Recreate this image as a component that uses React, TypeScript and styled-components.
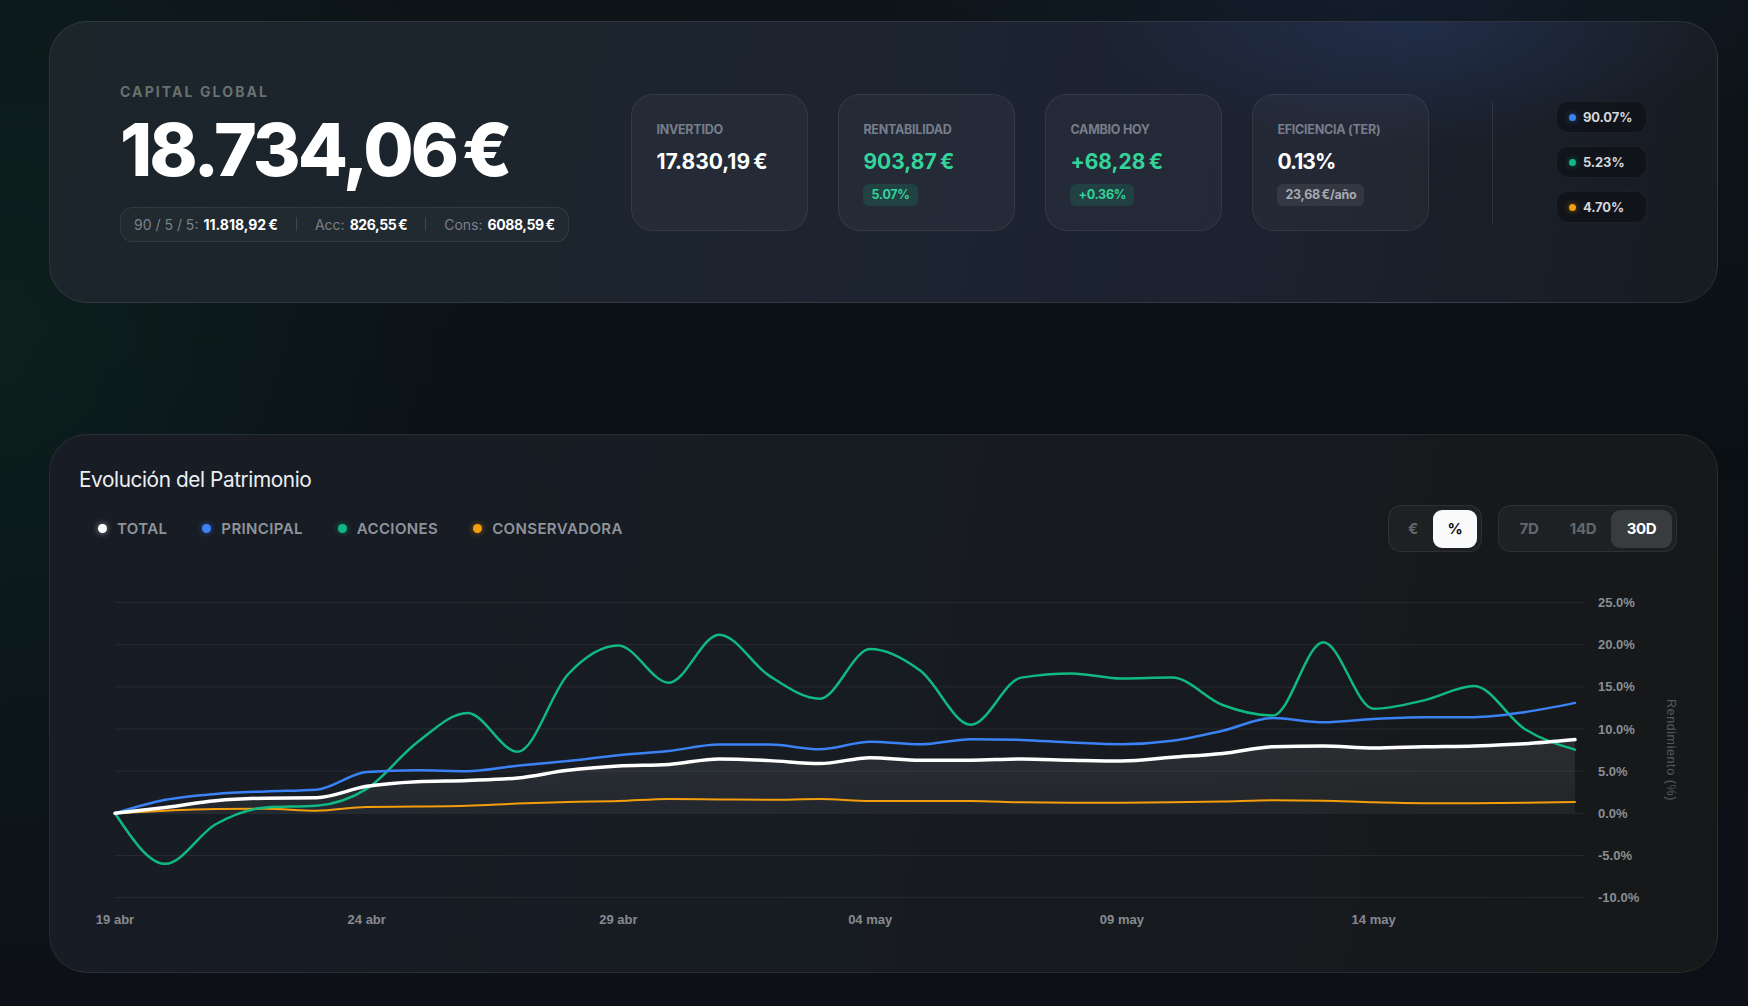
import React, { useState } from 'react';
import styled, { createGlobalStyle } from 'styled-components';

const GlobalStyle = createGlobalStyle`
  html, body {
    margin: 0;
    padding: 0;
  }
  body {
    background: #0b0f14;
    font-family: Inter, "Noto Sans", "Liberation Sans", sans-serif;
    -webkit-font-smoothing: antialiased;
  }
`;

const Page = styled.main`
  box-sizing: border-box;
  min-height: 1006px;
  padding: 21px 30px 0 49px;
  display: flex;
  flex-direction: column;
  gap: 131px;
  background:
    radial-gradient(ellipse 700px 900px at 0% 35%, rgba(14, 58, 44, 0.35), transparent 70%),
    radial-gradient(ellipse 700px 260px at 78% 0%, rgba(38, 58, 110, 0.22), transparent 70%),
    linear-gradient(180deg, #0d1418 0%, #0b1015 45%, #0d1117 100%);
`;

/* ---------- hero ---------- */

const HeroCard = styled.section`
  box-sizing: border-box;
  height: 282px;
  border-radius: 38px;
  border: 1px solid rgba(255, 255, 255, 0.09);
  padding: 0 70px;
  display: flex;
  align-items: center;
  justify-content: space-between;
  background:
    radial-gradient(ellipse 420px 160px at 82% 0%, rgba(52, 80, 150, 0.28), transparent 75%),
    linear-gradient(100deg, #1b252a 0%, #1d2430 45%, #1c2230 70%, #171c22 100%);
`;

const Summary = styled.div`
  display: flex;
  flex-direction: column;
  align-items: flex-start;
`;

const Eyebrow = styled.div`
  font-size: 14px;
  line-height: 17px;
  font-weight: 700;
  letter-spacing: 2.1px;
  color: #68716f;
  text-transform: uppercase;
`;

const BigNumber = styled.div`
  margin-top: 13px;
  font-size: 73px;
  line-height: 74px;
  font-weight: 800;
  letter-spacing: -0.04em;
  color: #ffffff;
  white-space: nowrap;
  span {
    margin-left: 0.08em;
  }
`;

const SplitPill = styled.div`
  margin-top: 20px;
  box-sizing: border-box;
  height: 35px;
  display: flex;
  align-items: center;
  gap: 18px;
  padding: 0 13px;
  border-radius: 13px;
  border: 1px solid rgba(255, 255, 255, 0.08);
  background: rgba(255, 255, 255, 0.025);
  font-size: 14px;
  white-space: nowrap;
`;

const SplitItem = styled.span`
  color: #7b8187;
  letter-spacing: 0;
  b {
    color: #ffffff;
    font-weight: 700;
    margin-left: 5px;
    letter-spacing: -0.03em;
  }
`;

const SplitSep = styled.span`
  width: 1px;
  height: 14px;
  background: rgba(255, 255, 255, 0.14);
`;

const Stats = styled.div`
  display: flex;
  gap: 30px;
`;

const StatCard = styled.div`
  box-sizing: border-box;
  width: 177px;
  height: 137px;
  padding: 28px 24px 0 24px;
  border-radius: 22px;
  border: 1px solid rgba(255, 255, 255, 0.07);
  background: rgba(255, 255, 255, 0.035);
  display: flex;
  flex-direction: column;
  align-items: flex-start;
`;

const StatLabel = styled.div`
  font-size: 12.5px;
  line-height: 14px;
  font-weight: 700;
  color: #777d8a;
  text-transform: uppercase;
  letter-spacing: -0.02em;
  white-space: nowrap;
`;

const StatValue = styled.div<{ $tone: 'plain' | 'good' }>`
  margin-top: 12px;
  font-size: 21px;
  line-height: 26px;
  font-weight: 700;
  letter-spacing: -0.045em;
  color: ${p => (p.$tone === 'good' ? '#34d399' : '#ffffff')};
  white-space: nowrap;
`;

const StatBadge = styled.span<{ $tone: 'good' | 'muted' }>`
  margin-top: 9px;
  height: 22px;
  display: inline-flex;
  align-items: center;
  padding: 0 8px;
  border-radius: 6px;
  font-size: 12.5px;
  font-weight: 700;
  letter-spacing: -0.02em;
  color: ${p => (p.$tone === 'good' ? '#34d399' : '#a6a9b0')};
  background: ${p => (p.$tone === 'good' ? 'rgba(16, 185, 129, 0.16)' : 'rgba(255, 255, 255, 0.08)')};
`;

const VDivider = styled.div`
  width: 1px;
  height: 123px;
  background: rgba(255, 255, 255, 0.09);
`;

const Chips = styled.div`
  display: flex;
  flex-direction: column;
  gap: 13px;
`;

const Chip = styled.div`
  box-sizing: border-box;
  width: 91px;
  height: 32px;
  padding: 0 12px;
  display: flex;
  align-items: center;
  gap: 7px;
  border-radius: 12px;
  border: 1px solid rgba(255, 255, 255, 0.06);
  background: rgba(6, 9, 14, 0.45);
  font-size: 13px;
  font-weight: 700;
  color: #d4d6da;
  letter-spacing: -0.01em;
`;

const Dot = styled.span<{ $color: string; $size?: number }>`
  flex: none;
  width: ${p => p.$size ?? 7}px;
  height: ${p => p.$size ?? 7}px;
  border-radius: 50%;
  background: ${p => p.$color};
  box-shadow: 0 0 6px ${p => p.$color}88;
`;

/* ---------- chart card ---------- */

const ChartCard = styled.section`
  box-sizing: border-box;
  height: 539px;
  border-radius: 38px;
  border: 1px solid rgba(255, 255, 255, 0.08);
  padding: 33px 40px 0 29px;
  background:
    linear-gradient(100deg, #181d25 0%, #171b22 50%, #161819 100%);
  display: flex;
  flex-direction: column;
`;

const ChartTitle = styled.h2`
  margin: 0;
  font-size: 20.8px;
  line-height: 24px;
  font-weight: 400;
  letter-spacing: -0.02em;
  color: #eceef1;
`;

const ControlsRow = styled.div`
  margin-top: 13px;
  height: 47px;
  display: flex;
  align-items: center;
  justify-content: space-between;
`;

const Legend = styled.div`
  display: flex;
  align-items: center;
  gap: 35px;
  padding-left: 19px;
`;

const LegendItem = styled.div`
  display: flex;
  align-items: center;
  gap: 10px;
  font-size: 15px;
  font-weight: 600;
  color: #8f949b;
  letter-spacing: 0.025em;
`;

const Toggles = styled.div`
  display: flex;
  gap: 16px;
`;

const ToggleGroup = styled.div`
  box-sizing: border-box;
  height: 47px;
  padding: 4px;
  display: flex;
  align-items: center;
  border-radius: 13px;
  border: 1px solid rgba(255, 255, 255, 0.07);
  background: rgba(255, 255, 255, 0.035);
`;

const ToggleButton = styled.button<{ $active: boolean; $variant: 'light' | 'dark'; $w: number }>`
  width: ${p => p.$w}px;
  height: 38px;
  border: none;
  border-radius: 9px;
  padding: 0;
  font-family: inherit;
  font-size: 15px;
  font-weight: 700;
  letter-spacing: -0.02em;
  cursor: pointer;
  color: ${p => (p.$active ? (p.$variant === 'light' ? '#0b0d10' : '#ffffff') : '#63676d')};
  background: ${p => (p.$active ? (p.$variant === 'light' ? '#fafafa' : '#393c3f') : 'transparent')};
`;

const ChartSvg = styled.svg`
  display: block;
  margin-top: 27px;
  margin-left: 2px;
  overflow: visible;
  font-family: "Liberation Sans", Arial, sans-serif;
`;

/* ---------- data ---------- */

type Series = { key: string; label: string; color: string; width: number; data: number[] };

const series: Series[] = [
  {
    key: 'total', label: 'TOTAL', color: '#ffffff', width: 3.5,
    data: [0, 0.7, 1.5, 1.8, 1.85, 3.2, 3.75, 3.9, 4.2, 5.1, 5.6, 5.8, 6.45, 6.25, 5.9, 6.6, 6.3, 6.3, 6.45, 6.3, 6.2, 6.65, 7.1, 7.9, 8.0, 7.75, 7.9, 8.0, 8.25, 8.75],
  },
  {
    key: 'principal', label: 'PRINCIPAL', color: '#3b82f6', width: 2.5,
    data: [0, 1.6, 2.3, 2.6, 2.8, 4.9, 5.1, 5.0, 5.65, 6.2, 6.9, 7.4, 8.15, 8.15, 7.6, 8.5, 8.2, 8.8, 8.7, 8.4, 8.2, 8.6, 9.8, 11.3, 10.8, 11.2, 11.4, 11.4, 12.0, 13.1],
  },
  {
    key: 'acciones', label: 'ACCIONES', color: '#10b981', width: 2.5,
    data: [0, -6.0, -1.3, 0.7, 0.9, 2.9, 8.4, 11.9, 7.3, 16.5, 19.9, 15.5, 21.2, 16.3, 13.6, 19.5, 16.9, 10.5, 16.1, 16.6, 16.0, 16.1, 12.85, 11.6, 20.3, 12.4, 13.4, 15.1, 10.0, 7.55],
  },
  {
    key: 'conservadora', label: 'CONSERVADORA', color: '#f59e0b', width: 2,
    data: [0, 0.3, 0.5, 0.55, 0.3, 0.75, 0.8, 0.9, 1.15, 1.35, 1.45, 1.7, 1.65, 1.6, 1.7, 1.45, 1.45, 1.45, 1.3, 1.25, 1.25, 1.3, 1.4, 1.55, 1.5, 1.3, 1.2, 1.2, 1.25, 1.35],
  },
];

const xTicks = ['19 abr', '24 abr', '29 abr', '04 may', '09 may', '14 may'];
const yTicks = [25, 20, 15, 10, 5, 0, -5, -10];

const W = 1598;
const H = 360;
const X0 = 34;
const GRID_END = 1504;
const DAY = 1460 / 29;
const Y_ZERO = 234.3;
const PER_PCT = 42.14 / 5;

const px = (i: number) => X0 + i * DAY;
const py = (v: number) => Y_ZERO - v * PER_PCT;

// monotone-x cubic, same maths as d3's curveMonotoneX
function monotonePath(pts: [number, number][]) {
  const n = pts.length;
  const t = new Array(n).fill(0);
  const sign = (v: number) => (v < 0 ? -1 : 1);
  for (let i = 1; i < n - 1; i++) {
    const [x0, y0] = pts[i - 1];
    const [x1, y1] = pts[i];
    const [x2, y2] = pts[i + 1];
    const h0 = x1 - x0, h1 = x2 - x1;
    const s0 = (y1 - y0) / h0, s1 = (y2 - y1) / h1;
    const p = (s0 * h1 + s1 * h0) / (h0 + h1);
    t[i] = (sign(s0) + sign(s1)) * Math.min(Math.abs(s0), Math.abs(s1), 0.5 * Math.abs(p)) || 0;
  }
  const h = pts[1][0] - pts[0][0];
  t[0] = (3 * (pts[1][1] - pts[0][1]) / h - t[1]) / 2;
  const hn = pts[n - 1][0] - pts[n - 2][0];
  t[n - 1] = (3 * (pts[n - 1][1] - pts[n - 2][1]) / hn - t[n - 2]) / 2;

  let d = `M${pts[0][0]},${pts[0][1]}`;
  for (let i = 0; i < n - 1; i++) {
    const [x0, y0] = pts[i];
    const [x1, y1] = pts[i + 1];
    const dx = (x1 - x0) / 3;
    d += ` C${x0 + dx},${y0 + dx * t[i]} ${x1 - dx},${y1 - dx * t[i + 1]} ${x1},${y1}`;
  }
  return d;
}

const linePath = (data: number[]) => monotonePath(data.map((v, i) => [px(i), py(v)] as [number, number]));

const EvolutionChart: React.FC = () => {
  const total = series[0];
  const last = total.data.length - 1;
  const area = `${linePath(total.data)} L${px(last)},${Y_ZERO} L${px(0)},${Y_ZERO} Z`;
  const drawOrder = [series[3], series[2], series[1], series[0]];

  return (
    <ChartSvg width={W} height={H} viewBox={`0 0 ${W} ${H}`}>
      <defs>
        <linearGradient id="totalFill" x1="0" y1="0" x2="0" y2="1">
          <stop offset="0%" stopColor="#ffffff" stopOpacity={0.09} />
          <stop offset="100%" stopColor="#ffffff" stopOpacity={0.05} />
        </linearGradient>
      </defs>

      {yTicks.map(v => (
        <g key={v}>
          <line x1={X0} x2={GRID_END} y1={py(v)} y2={py(v)} stroke="rgba(255,255,255,0.065)" strokeWidth={1} />
          <text x={1517} y={py(v)} dy="0.35em" fill="#8a8d92" fontSize={13} fontWeight={700}>
            {v.toFixed(1)}%
          </text>
        </g>
      ))}

      <text
        x={1586}
        y={171}
        transform="rotate(90 1586 171)"
        textAnchor="middle"
        fill="#55585d"
        fontSize={12.5}
        letterSpacing={0.6}
      >
        Rendimiento (%)
      </text>

      {xTicks.map((label, i) => (
        <text key={label} x={px(i * 5)} y={340} dy="0.35em" textAnchor="middle" fill="#878b91" fontSize={13} fontWeight={700}>
          {label}
        </text>
      ))}

      <path d={area} fill="url(#totalFill)" />

      {drawOrder.map(s => (
        <path
          key={s.key}
          d={linePath(s.data)}
          fill="none"
          stroke={s.color}
          strokeWidth={s.width}
          strokeLinecap="round"
          strokeLinejoin="round"
        />
      ))}
    </ChartSvg>
  );
};

/* ---------- page ---------- */

const stats = [
  { label: 'Invertido', value: '17.830,19\u202F€', tone: 'plain' as const },
  { label: 'Rentabilidad', value: '903,87\u202F€', tone: 'good' as const, badge: '5.07%', badgeTone: 'good' as const },
  { label: 'Cambio Hoy', value: '+68,28\u202F€', tone: 'good' as const, badge: '+0.36%', badgeTone: 'good' as const },
  { label: 'Eficiencia (TER)', value: '0.13%', tone: 'plain' as const, badge: '23,68\u202F€/año', badgeTone: 'muted' as const },
];

const weights = [
  { color: '#3b82f6', value: '90.07%' },
  { color: '#10b981', value: '5.23%' },
  { color: '#f59e0b', value: '4.70%' },
];

const App: React.FC = () => {
  const [unit, setUnit] = useState<'eur' | 'pct'>('pct');
  const [range, setRange] = useState<'7D' | '14D' | '30D'>('30D');

  return (
    <>
      <GlobalStyle />
      <Page>
        <HeroCard>
          <Summary>
            <Eyebrow>Capital Global</Eyebrow>
            <BigNumber>18.734,06<span>€</span></BigNumber>
            <SplitPill>
              <SplitItem>90 / 5 / 5:<b>11.818,92{'\u202F'}€</b></SplitItem>
              <SplitSep />
              <SplitItem>Acc:<b>826,55{'\u202F'}€</b></SplitItem>
              <SplitSep />
              <SplitItem>Cons:<b>6088,59{'\u202F'}€</b></SplitItem>
            </SplitPill>
          </Summary>

          <Stats>
            {stats.map(s => (
              <StatCard key={s.label}>
                <StatLabel>{s.label}</StatLabel>
                <StatValue $tone={s.tone}>{s.value}</StatValue>
                {s.badge && <StatBadge $tone={s.badgeTone!}>{s.badge}</StatBadge>}
              </StatCard>
            ))}
          </Stats>

          <VDivider />

          <Chips>
            {weights.map(w => (
              <Chip key={w.value}>
                <Dot $color={w.color} />
                {w.value}
              </Chip>
            ))}
          </Chips>
        </HeroCard>

        <ChartCard>
          <ChartTitle>Evolución del Patrimonio</ChartTitle>
          <ControlsRow>
            <Legend>
              {series.map(s => (
                <LegendItem key={s.key}>
                  <Dot $color={s.color} $size={9} />
                  {s.label}
                </LegendItem>
              ))}
            </Legend>
            <Toggles>
              <ToggleGroup>
                <ToggleButton $w={40} $variant="light" $active={unit === 'eur'} onClick={() => setUnit('eur')}>€</ToggleButton>
                <ToggleButton $w={44} $variant="light" $active={unit === 'pct'} onClick={() => setUnit('pct')}>%</ToggleButton>
              </ToggleGroup>
              <ToggleGroup>
                {(['7D', '14D', '30D'] as const).map(r => (
                  <ToggleButton key={r} $w={r === '30D' ? 61 : r === '14D' ? 56 : 52} $variant="dark" $active={range === r} onClick={() => setRange(r)}>
                    {r}
                  </ToggleButton>
                ))}
              </ToggleGroup>
            </Toggles>
          </ControlsRow>
          <EvolutionChart />
        </ChartCard>
      </Page>
    </>
  );
};

export default App;
